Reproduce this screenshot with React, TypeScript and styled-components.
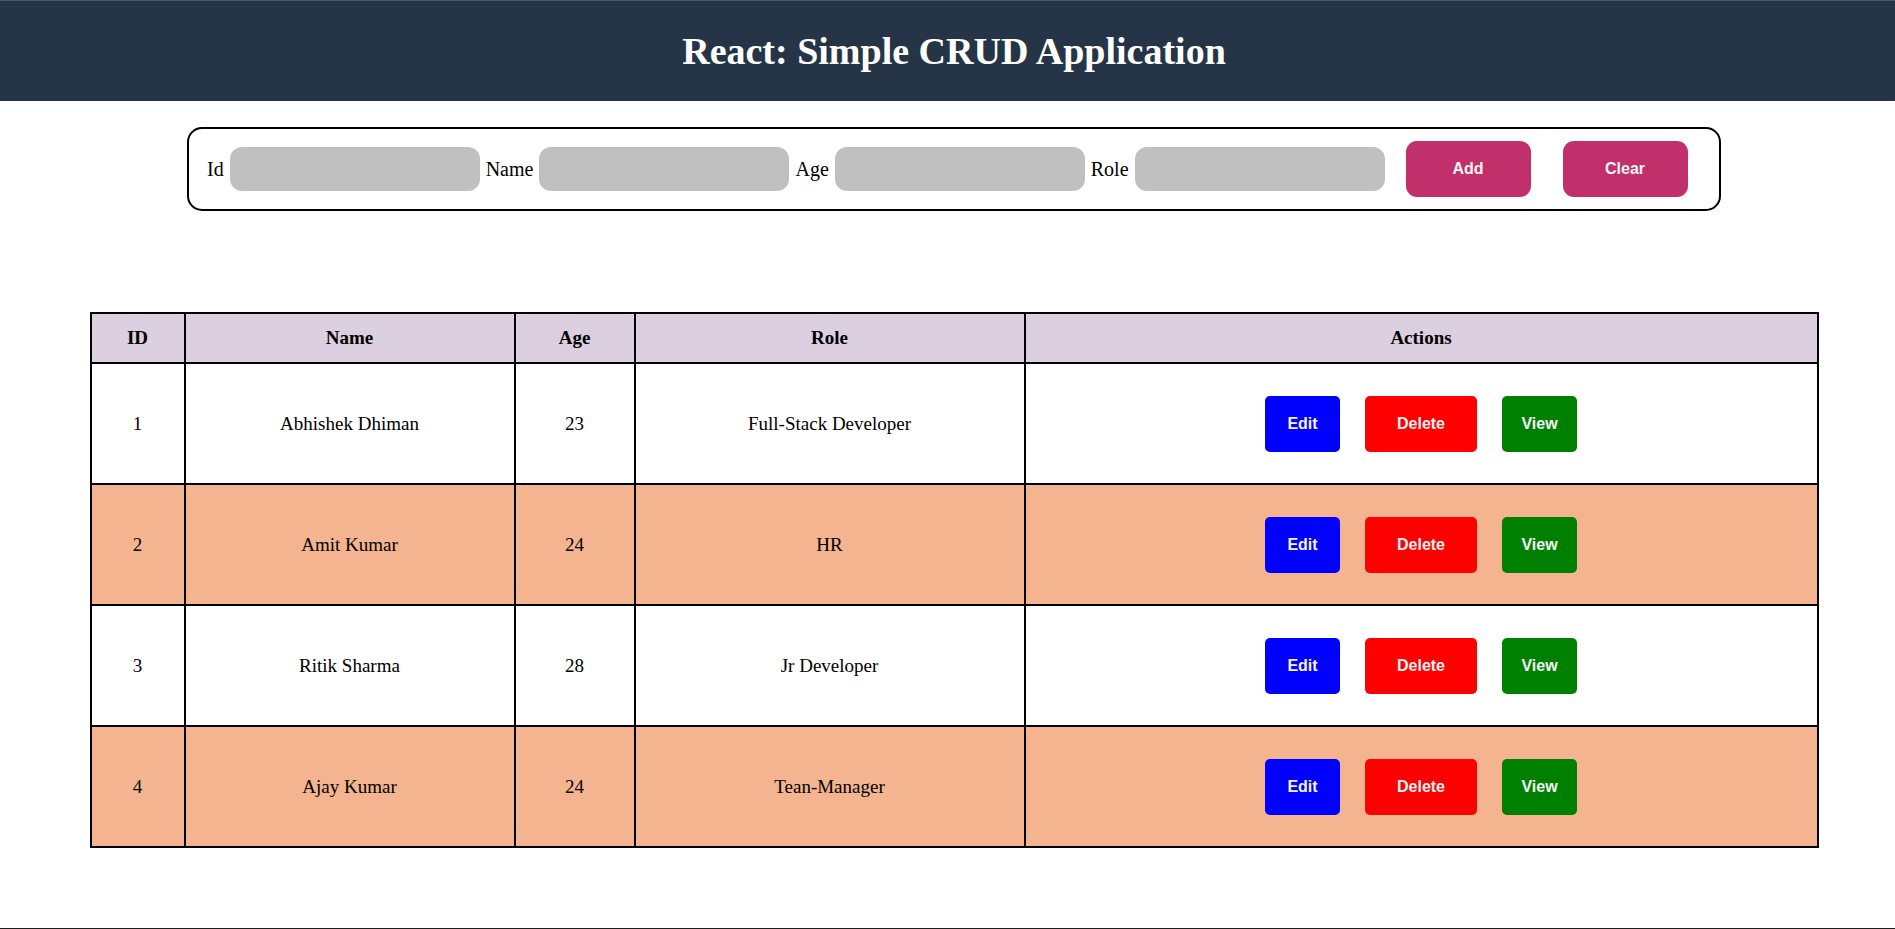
import React from "react";
import styled, { createGlobalStyle } from "styled-components";

const GlobalStyle = createGlobalStyle`
  html, body {
    margin: 0;
    padding: 0;
    background: #ffffff;
  }
  body {
    font-family: "Liberation Serif", "Times New Roman", serif;
  }
  * { box-sizing: border-box; }
`;

const Page = styled.div`
  min-height: 929px;
  border-bottom: 1px solid #1c1c1c;
  display: flex;
  flex-direction: column;
`;

const Header = styled.header`
  height: 101px;
  background: #253447;
  border-top: 1px solid #4f5763;
  display: flex;
  align-items: center;
  justify-content: center;
  padding-left: 13px;
`;

const Title = styled.h1`
  margin: 0;
  color: #ffffff;
  font-family: "Liberation Serif", "Times New Roman", serif;
  font-weight: bold;
  font-size: 38px;
`;

const Main = styled.main`
  display: flex;
  flex-direction: column;
  align-items: center;
  padding-left: 13px;
`;

const FormBox = styled.form`
  width: 1534px;
  height: 84px;
  margin-top: 26px;
  border: 2px solid #000;
  border-radius: 15px;
  display: flex;
  align-items: center;
  padding: 0 16px 0 18px;
`;

const Label = styled.label`
  font-family: "Liberation Serif", "Times New Roman", serif;
  font-size: 20px;
  color: #000;
  margin-right: 6px;
`;

const Input = styled.input`
  width: 250px;
  height: 44px;
  border: none;
  outline: none;
  background: #c0c0c0;
  border-radius: 12px;
  margin-right: 6px;
  padding: 0 10px;
  font-size: 16px;
`;

const FormButton = styled.button<{ $first?: boolean }>`
  width: 125px;
  height: 56px;
  margin-left: ${(p) => (p.$first ? "15px" : "32px")};
  border: none;
  border-radius: 11px;
  background: #c1306a;
  color: #f4f4f4;
  font-family: "Liberation Sans", Arial, sans-serif;
  font-weight: bold;
  font-size: 16px;
  cursor: pointer;
`;

const Table = styled.table`
  margin-top: 101px;
  width: 1727px;
  border-collapse: collapse;
  border: 2px solid #000;
  table-layout: fixed;
`;

const HeadCell = styled.th`
  height: 50px;
  padding: 0;
  border: 2px solid #000;
  background: #dccfdf;
  font-family: "Liberation Serif", "Times New Roman", serif;
  font-weight: bold;
  font-size: 19px;
  color: #000;
  text-align: center;
`;

const Row = styled.tr<{ $alt: boolean }>`
  background: ${(p) => (p.$alt ? "#f3b48f" : "#ffffff")};
`;

const Cell = styled.td`
  height: 121px;
  padding: 0;
  border: 2px solid #000;
  font-family: "Liberation Serif", "Times New Roman", serif;
  font-size: 19px;
  color: #000;
  text-align: center;
`;

const Actions = styled.div`
  display: flex;
  justify-content: center;
  align-items: center;
  gap: 25px;
`;

const ActionButton = styled.button<{ $color: string; $width: number }>`
  width: ${(p) => p.$width}px;
  height: 56px;
  border: none;
  border-radius: 5px;
  background: ${(p) => p.$color};
  color: #f4f4f4;
  font-family: "Liberation Sans", Arial, sans-serif;
  font-weight: bold;
  font-size: 16px;
  cursor: pointer;
`;

const data = [
  { id: 1, name: "Abhishek Dhiman", age: 23, role: "Full-Stack Developer" },
  { id: 2, name: "Amit Kumar", age: 24, role: "HR" },
  { id: 3, name: "Ritik Sharma", age: 28, role: "Jr Developer" },
  { id: 4, name: "Ajay Kumar", age: 24, role: "Tean-Manager" },
];

const colWidths = [94, 330, 120, 390, 793];

export default function App() {
  return (
    <>
      <GlobalStyle />
      <Page>
        <Header>
          <Title>React: Simple CRUD Application</Title>
        </Header>
        <Main>
          <FormBox onSubmit={(e) => e.preventDefault()}>
            <Label>Id</Label>
            <Input type="text" />
            <Label>Name</Label>
            <Input type="text" />
            <Label>Age</Label>
            <Input type="text" />
            <Label>Role</Label>
            <Input type="text" />
            <FormButton type="button" $first>
              Add
            </FormButton>
            <FormButton type="button">Clear</FormButton>
          </FormBox>
          <Table>
            <colgroup>
              {colWidths.map((w, i) => (
                <col key={i} style={{ width: w }} />
              ))}
            </colgroup>
            <thead>
              <tr>
                <HeadCell>ID</HeadCell>
                <HeadCell>Name</HeadCell>
                <HeadCell>Age</HeadCell>
                <HeadCell>Role</HeadCell>
                <HeadCell>Actions</HeadCell>
              </tr>
            </thead>
            <tbody>
              {data.map((d, i) => (
                <Row key={d.id} $alt={i % 2 === 1}>
                  <Cell>{d.id}</Cell>
                  <Cell>{d.name}</Cell>
                  <Cell>{d.age}</Cell>
                  <Cell>{d.role}</Cell>
                  <Cell>
                    <Actions>
                      <ActionButton $color="#0000ff" $width={75}>
                        Edit
                      </ActionButton>
                      <ActionButton $color="#ff0000" $width={112}>
                        Delete
                      </ActionButton>
                      <ActionButton $color="#008000" $width={75}>
                        View
                      </ActionButton>
                    </Actions>
                  </Cell>
                </Row>
              ))}
            </tbody>
          </Table>
        </Main>
      </Page>
    </>
  );
}
